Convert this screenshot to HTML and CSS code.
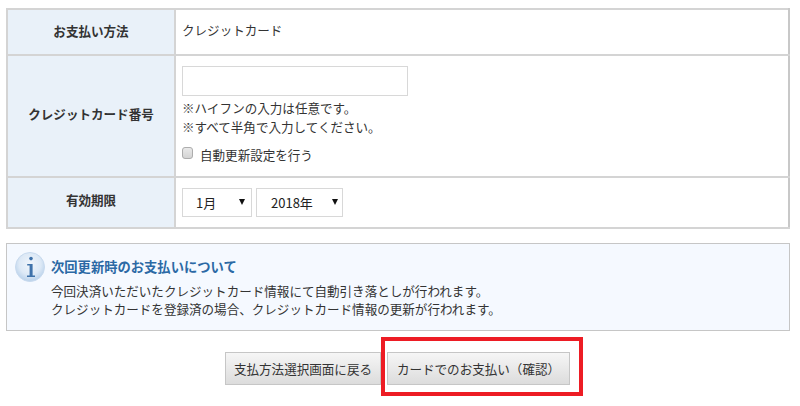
FILE: index.html
```html
<!DOCTYPE html>
<html lang="ja">
<head>
<meta charset="utf-8">
<title>お支払い</title>
<link rel="stylesheet" href="styles.css">
</head>
<body>
<main class="page">
  <table class="form-table">
    <tr class="row-method">
      <th>お支払い方法</th>
      <td>クレジットカード</td>
    </tr>
    <tr class="row-card">
      <th>クレジットカード番号</th>
      <td>
        <input class="card-input" type="text">
        <p class="note">※ハイフンの入力は任意です。</p>
        <p class="note">※すべて半角で入力してください。</p>
        <label class="auto"><input class="check" type="checkbox"><span>自動更新設定を行う</span></label>
      </td>
    </tr>
    <tr class="row-expiry">
      <th>有効期限</th>
      <td>
        <div class="selects">
          <div class="select month"><span>1月</span></div>
          <div class="select year"><span>2018年</span></div>
        </div>
      </td>
    </tr>
  </table>

  <section class="info">
    <div class="info-head">
      <svg class="info-icon" width="30" height="30" viewBox="0 0 30 30" aria-hidden="true">
        <defs>
          <radialGradient id="disc" cx="50%" cy="40%" r="62%">
            <stop offset="0" stop-color="#f0f5fb"/>
            <stop offset="0.6" stop-color="#dde9f6"/>
            <stop offset="1" stop-color="#b4cee9"/>
          </radialGradient>
        </defs>
        <circle cx="15" cy="15" r="14.5" fill="url(#disc)" stroke="#c8daee"/>
        <circle cx="16" cy="6.6" r="1.8" fill="#3f72aa"/>
        <path d="M12.2 12h5.4v11.6h2.4v1.4h-8v-1.4h2.6v-10.2h-2.4z" fill="#3f72aa"/>
      </svg>
      <h2>次回更新時のお支払いについて</h2>
    </div>
    <p>今回決済いただいたクレジットカード情報にて自動引き落としが行われます。</p>
    <p>クレジットカードを登録済の場合、クレジットカード情報の更新が行われます。</p>
  </section>

  <div class="actions">
    <button class="btn back" type="button">支払方法選択画面に戻る</button>
    <button class="btn confirm" type="button">カードでのお支払い（確認）</button>
    <div class="highlight"></div>
  </div>
</main>
</body>
</html>
```

FILE: styles.css
```css
* { box-sizing: border-box; }
html, body { margin: 0; padding: 0; background: #fff; }
body {
  width: 800px;
  height: 406px;
  overflow: hidden;
  font-family: "Noto Sans CJK JP", "Noto Sans", sans-serif;
  font-size: 12.55px;
  color: #333;
}
.page { padding: 8px 10px 0 6px; }
p { margin: 0; }

.form-table {
  width: 784px;
  border-collapse: collapse;
  table-layout: fixed;
  border: 2px solid #d4d4d4;
  border-right-color: #c8c8c8;
}
.form-table th, .form-table td {
  border-bottom: 2px solid #d4d4d4;
  padding: 0 0 0 6px;
  vertical-align: middle;
  font-weight: normal;
}
.form-table th {
  width: 168px;
  padding: 0 0 4px;
  background: #e9f1f9;
  border-right: 2px solid #d4d4d4;
  text-align: center;
  font-weight: bold;
}
.form-table td { padding-bottom: 5px; }
.row-method { height: 46px; }
.row-card { height: 122px; }
.row-expiry { height: 51px; }
.row-card th { padding-bottom: 6px; }
.row-expiry th { padding-bottom: 6px; }
.row-card td { padding-bottom: 2px; }
.row-expiry td { padding-bottom: 0; }

.card-input {
  display: block;
  width: 226px;
  height: 30px;
  border: 1px solid #d8d8d8;
  background: #fff;
  margin-bottom: 2px;
}
.note { line-height: 19px; height: 19px; }
.auto { display: flex; align-items: center; margin-top: 9px; }
.check {
  appearance: none;
  width: 11px;
  height: 12px;
  margin: 0 7px 3px 0;
  border: 1px solid #adadad;
  border-radius: 3px;
  background: linear-gradient(#e9e9e9, #d4d4d4);
}
.auto span { line-height: 19px; }

.selects { display: flex; gap: 4px; }
.select {
  position: relative;
  height: 29px;
  border: 1px solid #d8d8d8;
  display: flex;
  align-items: center;
  background: #fff;
  font-size: 13px;
}
.select span { line-height: 1; color: #222; }
.month { width: 70px; padding-left: 13px; }
.year { width: 87px; padding-left: 14px; }
.select::after {
  content: "";
  position: absolute;
  right: 4px;
  top: 10px;
  border-style: solid;
  border-width: 6px 3.5px 0;
  border-color: #111 transparent transparent;
}
.month::after { right: 6px; }

.info {
  margin-top: 14px;
  width: 784px;
  height: 88px;
  padding: 8px 9px 0 8px;
  border: 1px solid #c6c6c6;
  background: #f5f9ff;
  line-height: 18px;
}
.info-head { display: flex; align-items: center; gap: 6px; margin-bottom: 0; }
.info p { padding-left: 36px; color: #333; }
.info h2 { margin: 0; font-size: 13.3px; font-weight: bold; color: #2b69a5; }

.actions {
  position: relative;
  display: flex;
  justify-content: flex-start;
  gap: 6px;
  padding: 21px 0 0 219px;
}
.btn {
  height: 33px;
  border: 1px solid #c6c6c6;
  background: linear-gradient(#f6f6f6, #dcdcdc);
  font: inherit;
  color: #333;
  padding: 0;
}
.back { width: 156px; }
.confirm { width: 183px; }
.highlight {
  position: absolute;
  left: 375px;
  top: 6px;
  width: 202px;
  height: 59px;
  border: 4px solid #ed1c24;
  pointer-events: none;
}
```
